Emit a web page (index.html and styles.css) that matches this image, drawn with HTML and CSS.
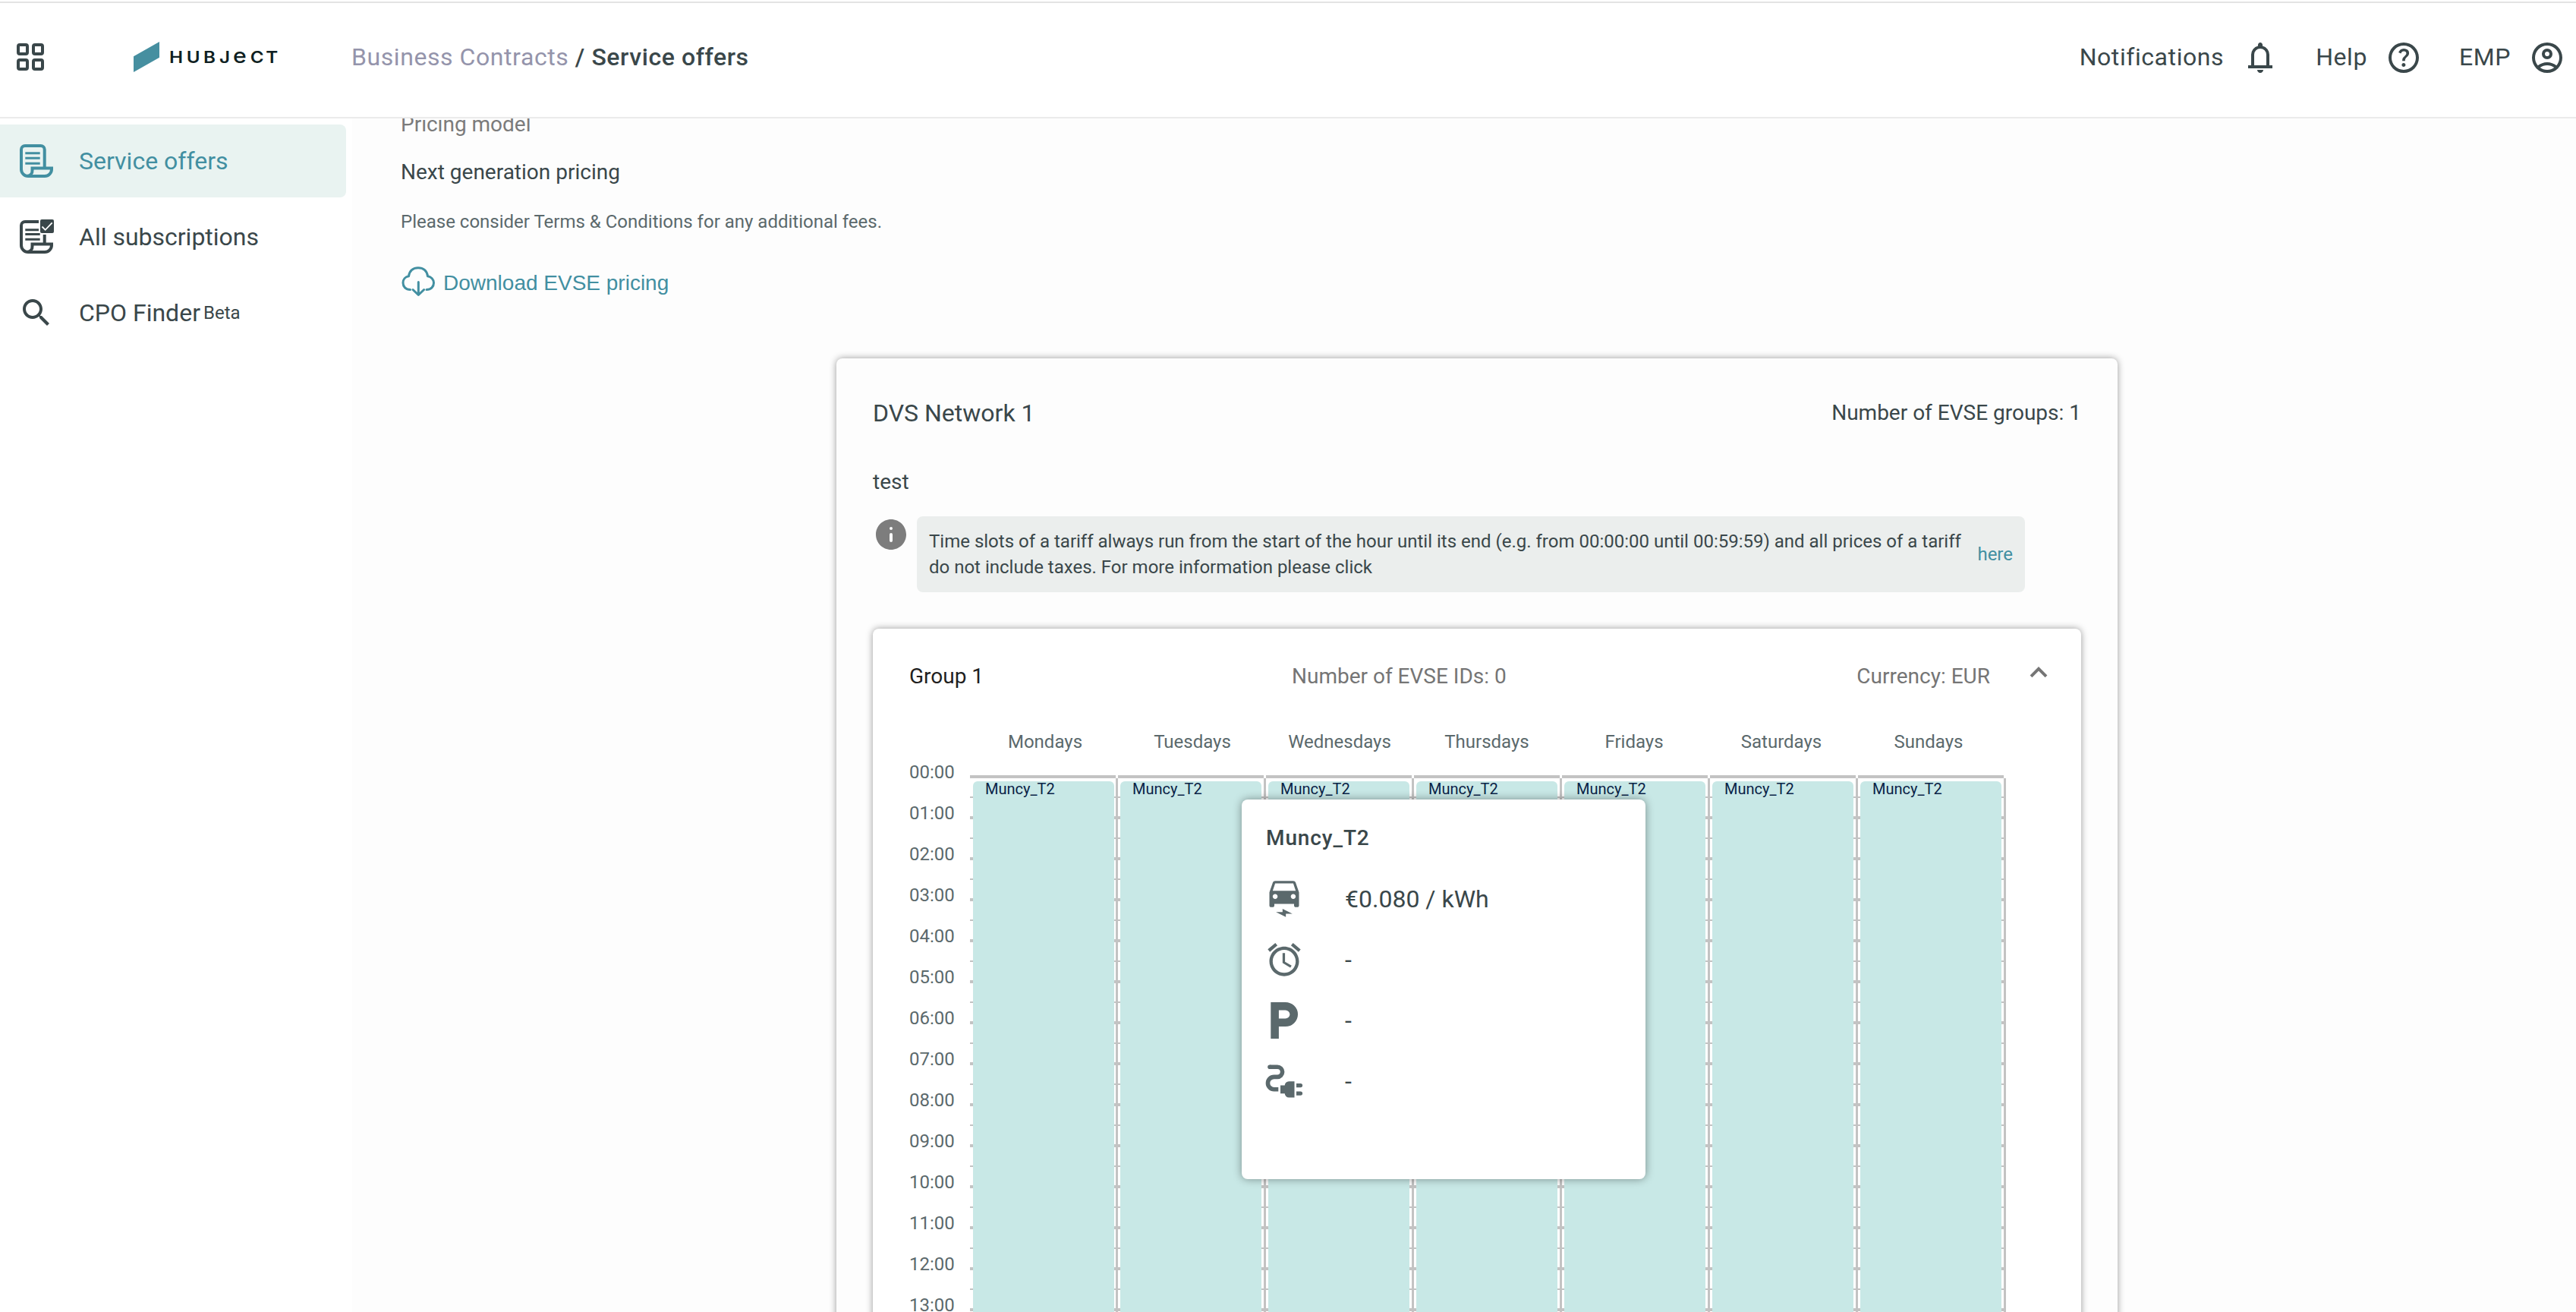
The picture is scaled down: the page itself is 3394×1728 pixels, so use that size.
FILE: index.html
```
<!DOCTYPE html>
<html lang="en">
<head>
  <meta charset="UTF-8">
  <title>Service offers | Hubject</title>
  <link rel="stylesheet" href="styles.css">
</head>
<body>
  <header class="header">
    <svg class="apps-icon" width="36" height="36" viewBox="0 0 36 36" fill="none" stroke="currentColor" stroke-width="4">
      <rect x="2" y="2" width="12" height="12" rx="2"/>
      <rect x="22" y="2" width="12" height="12" rx="2"/>
      <rect x="2" y="22" width="12" height="12" rx="2"/>
      <rect x="22" y="22" width="12" height="12" rx="2"/>
    </svg>
    <svg class="logo" width="194" height="40" viewBox="0 0 194 40">
      <path d="M0 19.3L34 0v20.7L0 40z" fill="#468fa0"/>
      <text transform="scale(1.12 1)" y="27.8" x="42 62.4 82.1 101 117 137.2 155.6">HUBJ<tspan class="logo-e">e</tspan>CT</text>
    </svg>
    <div class="breadcrumb"><a href="#">Business Contracts</a><b> / Service offers</b></div>
    <div class="header-nav">
      <span>Notifications</span>
      <svg width="48" height="48" viewBox="0 -960 960 960" fill="currentColor"><path d="M160-200v-80h80v-280q0-83 50-147.5T420-792v-28q0-25 17.5-42.5T480-880t42.5 17.5T540-820v28q80 20 130 84.5T720-560v280h80v80H160Zm320 120q-33 0-56.5-23.5T400-160h160q0 33-23.5 56.5T480-80ZM320-280h320v-280q0-66-47-113t-113-47-113 47-47 113v280Z"/></svg>
      <span>Help</span>
      <svg width="48" height="48" viewBox="0 -960 960 960" fill="currentColor"><path d="M478-240q21 0 35.500-14.500T528-290q0-21-14.500-35.500T478-340q-21 0-35.500 14.500T428-290q0 21 14.500 35.500T478-240Zm-36-154h74q0-33 7.500-52t42.500-52q26-26 41-49.500t15-56.500q0-56-41-86t-97-30q-57 0-92.500 30T342-618l66 26q5-18 22.500-39t53.500-21q32 0 48 17.500t16 38.500q0 20-12 37.500T506-526q-44 39-54 59t-10 73Zm38 314q-83 0-156-31.500T197-197q-54-54-85.500-127T80-480q0-83 31.500-156T197-763q54-54 127-85.500T480-880q83 0 156 31.500T763-763q54 54 85.500 127T880-480q0 83-31.500 156T763-197q-54 54-127 85.500T480-80Zm0-80q134 0 227-93t93-227q0-134-93-227t-227-93q-134 0-227 93t-93 227q0 134 93 227t227 93Z"/></svg>
      <span>EMP</span>
      <svg width="48" height="48" viewBox="0 -960 960 960" fill="currentColor"><path d="M234-276q51-39 114-61.500T480-360q69 0 132 22.500T726-276q35-41 54.500-93T800-480q0-133-93.500-226.500T480-800q-133 0-226.500 93.500T160-480q0 59 19.500 111t54.500 93Zm246-164q-59 0-99.500-40.500T340-580q0-59 40.500-99.500T480-720q59 0 99.500 40.500T620-580q0 59-40.500 99.500T480-440Zm0 360q-83 0-156-31.500T197-197q-54-54-85.500-127T80-480q0-83 31.500-156T197-763q54-54 127-85.500T480-880q83 0 156 31.500T763-763q54 54 85.500 127T880-480q0 83-31.500 156T763-197q-54 54-127 85.500T480-80Zm0-80q53 0 100-15.500t86-44.500q-39-29-86-44.500T480-280q-53 0-100 15.500T294-220q39 29 86 44.500T480-160Zm0-360q26 0 43-17t17-43q0-26-17-43t-43-17q-26 0-43 17t-17 43q0 26 17 43t43 17Z"/></svg>
    </div>
  </header>

  <div class="page">
    <nav class="sidebar">
      <a class="side-item active" href="#">
        <svg width="48" height="48" viewBox="0 0 48 48" fill="none" stroke="currentColor" stroke-width="4">
          <path d="M34.700 33V9a5 5 0 0 0-5-5H9a5 5 0 0 0-5 5v26a9 9 0 0 0 9 9h22a9 9 0 0 0 9-9v-1.500H18.500v3a7 7 0 0 1-6 7.300"/>
          <path stroke-width="3" d="M9.300 13.700h19.400M9.300 20.300h19.400M9.300 27.300h19.400"/>
        </svg>
        <span>Service offers</span>
      </a>
      <a class="side-item" href="#">
        <svg width="48" height="48" viewBox="0 0 48 48" fill="none" stroke="currentColor" stroke-width="4">
          <path d="M27 4H9a5 5 0 0 0-5 5v26a9 9 0 0 0 9 9h22a9 9 0 0 0 9-9v-1.500H18.500v3a7 7 0 0 1-6 7.300M34.700 33V21"/>
          <path stroke-width="3" d="M9.300 14.700h17.700M9.300 20.600h19.400M9.300 27.300h19.400"/>
          <rect x="29" y="1" width="18" height="18" rx="2" fill="currentColor" stroke="none"/>
          <path stroke="#fff" stroke-width="1.800" d="M31.500 10.500l4.200 4.300 9-9.500"/>
        </svg>
        <span>All subscriptions</span>
      </a>
      <a class="side-item" href="#">
        <svg width="48" height="48" viewBox="0 0 24 24" fill="currentColor"><path d="M15.500 14h-.79l-.28-.27C15.410 12.590 16 11.110 16 9.500 16 5.910 13.090 3 9.500 3S3 5.910 3 9.500 5.910 16 9.500 16c1.610 0 3.090-.59 4.230-1.570l.27.28v.79l5 4.990L20.490 19l-4.990-5zm-6 0C7.010 14 5 11.990 5 9.500S7.010 5 9.500 5 14 7.010 14 9.500 11.990 14 9.500 14z"/></svg>
        <span>CPO Finder</span><span class="beta">Beta</span>
      </a>
    </nav>

    <main class="main">
      <div class="field-label">Pricing model</div>
      <div class="field-value">Next generation pricing</div>
      <div class="field-hint">Please consider Terms &amp; Conditions for any additional fees.</div>
      <a class="download" href="#">
        <svg width="46" height="40" viewBox="0 0 46 40" fill="none" stroke="currentColor" stroke-width="3" stroke-linecap="round" stroke-linejoin="round">
          <path d="M12.500 30.500C6.500 30.500 3 26.500 3 21.500c0-4.500 3-8 7.500-8.700C11.500 5.500 16.500 1.700 23 1.700s11.500 3.800 12.500 11.100C40 13.500 43.500 17 43.500 21.500c0 5-3.500 9-9.500 9"/>
          <path d="M23.300 20.500v16.500M16 30.500l7.300 7 7.300-7"/>
        </svg>
        <span>Download EVSE pricing</span>
      </a>

      <section class="network-card">
        <div class="network-head">
          <span class="network-title">DVS Network 1</span>
          <span>Number of EVSE groups: 1</span>
        </div>
        <div class="network-desc">test</div>
        <div class="info-row">
          <svg width="48" height="48" viewBox="0 0 24 24" fill="#7d7d7d"><path d="M12 2C6.480 2 2 6.480 2 12s4.480 10 10 10 10-4.480 10-10S17.520 2 12 2zm1 14a1 1 0 0 1-2 0v-4a1 1 0 0 1 2 0zm-1-7a1 1 0 1 1 0-2 1 1 0 0 1 0 2z"/></svg>
          <div class="info-box">
            <p>Time slots of a tariff always run from the start of the hour until its end (e.g. from 00:00:00 until 00:59:59) and all prices of a tariff<br>do not include taxes. For more information please click</p>
            <a href="#">here</a>
          </div>
        </div>

        <div class="group-card">
          <div class="group-head">
            <span class="group-title">Group 1</span>
            <span class="group-ids">Number of EVSE IDs: 0</span>
            <span class="group-currency">Currency: EUR</span>
            <svg width="24" height="32" viewBox="0 0 24 32" fill="none" stroke="currentColor" stroke-width="4"><path d="M2 15.800L12 5.800l10 10"/></svg>
          </div>

          <div class="calendar">
            <div class="times">
              <div>00:00</div><div>01:00</div><div>02:00</div><div>03:00</div><div>04:00</div>
              <div>05:00</div><div>06:00</div><div>07:00</div><div>08:00</div><div>09:00</div>
              <div>10:00</div><div>11:00</div><div>12:00</div><div>13:00</div>
            </div>
            <div class="week">
              <div class="day-names">
                <span>Mondays</span><span>Tuesdays</span><span>Wednesdays</span><span>Thursdays</span>
                <span>Fridays</span><span>Saturdays</span><span>Sundays</span>
              </div>
              <div class="days">
                <div class="day"><div class="slot">Muncy_T2</div></div>
                <div class="day"><div class="slot">Muncy_T2</div></div>
                <div class="day"><div class="slot">Muncy_T2</div></div>
                <div class="day"><div class="slot">Muncy_T2</div></div>
                <div class="day"><div class="slot">Muncy_T2</div></div>
                <div class="day"><div class="slot">Muncy_T2</div></div>
                <div class="day"><div class="slot">Muncy_T2</div></div>
              </div>
            </div>

            <!-- tariff tooltip -->
            <div class="tooltip">
              <div class="tooltip-title">Muncy_T2</div>
              <div class="tooltip-row">
                <svg width="52" height="52" viewBox="0 0 24 24" fill="currentColor"><path d="M18.920 2.010C18.720 1.420 18.160 1 17.500 1h-11c-.66 0-1.210.42-1.420 1.010L3 8v8c0 .55.45 1 1 1h1c.55 0 1-.45 1-1v-1h12v1c0 .55.45 1 1 1h1c.55 0 1-.45 1-1V8l-2.080-5.990zM6.500 12c-.83 0-1.500-.67-1.500-1.500S5.670 9 6.500 9 8 9.670 8 10.500 7.330 12 6.500 12zm11 0c-.83 0-1.500-.67-1.500-1.500s.67-1.500 1.500-1.500 1.500.67 1.500 1.500-.67 1.500-1.500 1.500zM5 7l1.500-4.500h11L19 7H5zM7 20h4v-2l6 3h-4v2z"/></svg>
                <span>€0.080 / kWh</span>
              </div>
              <div class="tooltip-row">
                <svg width="52" height="52" viewBox="0 0 24 24" fill="currentColor"><path d="M22 5.720l-4.600-3.860-1.290 1.530 4.600 3.860L22 5.720zM7.880 3.390L6.600 1.860 2 5.710l1.290 1.530 4.590-3.850zM12.500 8H11v6l4.750 2.850.75-1.230-4-2.370V8zM12 4c-4.970 0-9 4.030-9 9s4.020 9 9 9c4.970 0 9-4.030 9-9s-4.030-9-9-9zm0 16c-3.870 0-7-3.130-7-7s3.130-7 7-7 7 3.130 7 7-3.130 7-7 7z"/></svg>
                <span>-</span>
              </div>
              <div class="tooltip-row">
                <svg width="52" height="52" viewBox="0 0 52 52" fill="none" stroke="currentColor" stroke-width="10.600"><path d="M13.600 50V7.300H27.500a11.200 10.700 0 0 1 0 21.400H13.600"/></svg>
                <span>-</span>
              </div>
              <div class="tooltip-row">
                <svg width="52" height="52" viewBox="0 0 52 52" fill="currentColor">
                  <path fill="none" stroke="currentColor" stroke-width="5.600" d="M7 7.200H17a6.600 6.600 0 0 1 0 13.200h-4.400a8.150 8.150 0 0 0 0 16.300h5.700"/>
                  <circle cx="7" cy="7.200" r="2.800"/>
                  <path d="M21 31.500h5.700a5.500 5.500 0 0 1 5.500-5.300h7.300v21.200h-7.300a5.500 5.500 0 0 1-5.500-5.200H21z"/>
                  <path d="M42 29h5.500a2.600 2.600 0 0 1 0 5.200H42zM42 39.500h5.500a2.600 2.600 0 0 1 0 5.200H42z"/>
                </svg>
                <span>-</span>
              </div>
            </div>
          </div>
        </div>
      </section>
    </main>
  </div>
</body>
</html>
```
FILE: styles.css
```
* { box-sizing: border-box; }
body {
  margin: 0;
  padding-top: 2px;
  height: 1728px;
  overflow: hidden;
  font-family: Roboto, sans-serif;
  font-size: 28px;
  line-height: 32px;
  color: #3a474a;
  background: #fff;
}
a { color: #428fa1; text-decoration: none; }
svg { display: block; flex: none; }

/* header */
.header {
  height: 154px;
  padding: 0 14px 8px 22px;
  border-top: 2px solid #e3e3e3;
  border-bottom: 2px solid #ebebeb;
  display: flex;
  align-items: center;
  font-size: 32px;
  letter-spacing: 0.57px;
}
.logo {
  margin-left: 118px;
  font-family: Inter, sans-serif;
  font-size: 21.6px;
  font-weight: 600;
  letter-spacing: 0;
  fill: #0f1f22;
}
.logo-e { font-size: 27px; font-weight: 500; }
.breadcrumb { margin-left: 93px; }
.breadcrumb a { color: #9494ab; }
.breadcrumb b { font-weight: 500; }
.header-nav {
  margin-left: auto;
  padding-top: 2px;
  display: flex;
  align-items: center;
}
.header-nav span { padding-bottom: 3px; margin-right: 24px; }
.header-nav svg { margin-right: 49px; }
.header-nav svg:last-child { margin-right: 0; }

/* layout */
.page { display: flex; height: 1572px; }
.sidebar { width: 464px; padding-top: 8px; flex: none; }
.side-item {
  width: 456px;
  height: 96px;
  margin-bottom: 4px;
  padding-left: 24px;
  display: flex;
  align-items: center;
  font-size: 32px;
  color: #3a474a;
}
.side-item svg { margin-right: 32px; }
.side-item.active {
  background: #e9f3f1;
  color: #428fa1;
  border-radius: 0 8px 8px 0;
}
.beta { font-size: 24px; margin-left: 4px; }
.main {
  flex: 1;
  padding-left: 64px;
  background: #fdfdfd;
  overflow: hidden;
}
.field-label { margin-top: -8px; color: #7b7b7b; }
.field-value { margin-top: 31px; }
.field-hint { margin-top: 33px; font-size: 24px; color: #5b696c; }
.download {
  margin-top: 43px;
  height: 40px;
  display: flex;
  align-items: center;
  gap: 10px;
  font-family: "Liberation Sans", Arial, sans-serif;
}
.download span { padding-top: 4px; }

/* network card */
.network-card {
  width: 1688px;
  height: 1400px;
  margin: 81px 0 0 574px;
  padding: 52px 48px 0;
  border-radius: 8px;
  background: #fdfdfd;
  box-shadow: 0 0 10px rgba(0, 0, 0, 0.4);
}
.network-head {
  height: 40px;
  display: flex;
  justify-content: space-between;
  align-items: center;
}
.network-title { font-size: 32px; }
.network-desc { margin-top: 55px; }
.info-row { margin-top: 29px; display: flex; gap: 10px; }
.info-box {
  width: 1460px;
  height: 100px;
  padding: 0 16px;
  border-radius: 8px;
  background: #ebeeed;
  display: flex;
  align-items: center;
  justify-content: space-between;
  font-size: 24px;
  line-height: 34px;
}
.info-box p { margin: 0; white-space: nowrap; }

/* group card */
.group-card {
  height: 1200px;
  margin-top: 48px;
  padding: 47px 44px 0 48px;
  border-radius: 8px;
  background: #fff;
  box-shadow: 0 0 10px rgba(0, 0, 0, 0.4);
}
.group-head { display: flex; color: #757575; }
.group-title { width: 504px; color: #1f1f1f; }
.group-currency { margin-left: auto; margin-right: 52px; }

/* calendar */
.calendar {
  position: relative;
  margin-top: 54px;
  display: flex;
  font-size: 24px;
  color: #5b696c;
}
.times { width: 80px; padding-top: 29px; }
.times div { height: 54px; line-height: 54px; }
.day-names {
  display: flex;
  padding: 0 0 28px 2px;
}
.day-names span { width: 194px; text-align: center; }
.days { display: flex; }
/* 54px per hour: 4px line on the hour, 2px line on the half hour */
.day {
  width: 195px;
  height: 800px;
  padding-left: 3px;
  background:
    linear-gradient(#fff, #fff) 192px 0 / 3px 4px no-repeat,
    linear-gradient(#c3c3c3, #c3c3c3) 192px 0 / 3px 100% no-repeat,
    repeating-linear-gradient(#c3c3c3 0 4px, #fff 4px 28px, #c3c3c3 28px 30px, #fff 30px 54px);
}
.day:first-child { padding-left: 4px; }
.slot {
  position: relative;
  top: 8px;
  width: 186px;
  height: 800px;
  padding-left: 16px;
  border-radius: 6px;
  background: #c8e8e6;
  color: #0a2347;
  font-size: 20px;
  line-height: 20px;
}

/* tooltip */
.tooltip {
  position: absolute;
  left: 438px;
  top: 92px;
  width: 532px;
  height: 500px;
  padding: 31px 32px;
  border-radius: 8px;
  background: #fff;
  box-shadow: 0 0 12px rgba(0, 0, 0, 0.4);
}
.tooltip-title {
  margin-bottom: 20px;
  font-size: 28px;
  font-weight: 500;
  line-height: 40px;
  letter-spacing: 0.9px;
  color: #3a474a;
}
.tooltip-row {
  height: 80px;
  margin-left: -2px;
  display: flex;
  align-items: center;
  gap: 54px;
  font-size: 32px;
}
.tooltip-row span { color: #3a474a; }
```
